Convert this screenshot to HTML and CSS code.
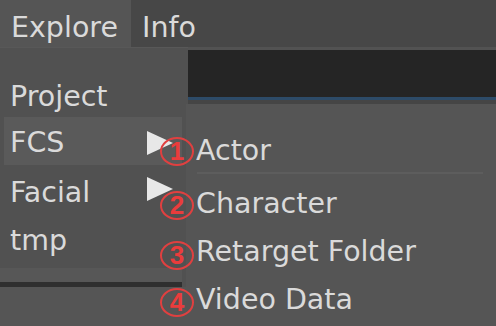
FILE: index.html
```html
<!DOCTYPE html>
<html>
<head>
<meta charset="utf-8">
<link rel="stylesheet" href="styles.css">
</head>
<body>
<div class="app">
  <div class="menubar">
    <div class="tab tab-active">Explore</div>
    <div class="tab">Info</div>
  </div>
  <div class="content">
    <div class="viewport-strip"></div>
    <div class="viewport-line"></div>
  </div>

  <div class="dropdown">
    <div class="item">Project</div>
    <div class="item item-hover">FCS</div>
    <div class="item">Facial</div>
    <div class="item">tmp</div>
    <div class="dropdown-foot"></div>
  </div>

  <div class="submenu">
    <div class="item">Actor</div>
    <div class="separator"></div>
    <div class="item">Character</div>
    <div class="item">Retarget Folder</div>
    <div class="item">Video Data</div>
  </div>

  <svg class="arrow arrow-fcs" width="28" height="26" viewBox="0 0 28 26"><polygon points="1,1 27,13 1,25" fill="#e8e8e8"/></svg>
  <svg class="arrow arrow-facial" width="28" height="26" viewBox="0 0 28 26"><polygon points="1,1 27,13 1,25" fill="#e8e8e8"/></svg>

  <span class="badge badge-1">1</span>
  <span class="badge badge-2">2</span>
  <span class="badge badge-3">3</span>
  <span class="badge badge-4">4</span>
</div>
</body>
</html>
```

FILE: styles.css
```css
* { box-sizing: border-box; }
html, body {
  margin: 0;
  padding: 0;
  width: 496px;
  height: 326px;
  overflow: hidden;
  background: #555555;
}
.app {
  position: relative;
  width: 496px;
  height: 326px;
  font-family: "DejaVu Sans", sans-serif;
  font-size: 28.5px;
  color: #dadada;
  background: #555555;
}
.menubar {
  display: flex;
  height: 47px;
  background: #474747;
}
.tab {
  padding: 9px 0 0 11px;
  line-height: 38px;
}
.tab-active {
  width: 131px;
  background: #555555;
}
.content {
  border-top: 3px solid #525252;
}
.viewport-strip {
  height: 47px;
  background: #252525;
}
.viewport-line {
  background: #2d4b68;
  border-bottom: 4px solid #454545;
  height: 7px;
}
.dropdown {
  position: absolute;
  left: 0;
  top: 47px;
  width: 188px;
  padding-top: 21px;
  background: #515151;
  border-top: 1px solid #585858;
}
.item {
  height: 48px;
  line-height: 40px;
  padding: 8px 0 0 10px;
  white-space: nowrap;
}
.item-hover {
  margin-right: 6px;
  margin-left: 4px;
  padding-left: 6px;
  padding-top: 6px;
  background: #5a5a5a;
}
.dropdown-foot {
  margin-top: 7px;
  background: #575757;
  border-bottom: 5px solid #2f2f2f;
  height: 19px;
  margin-right: 6px;
}
.submenu {
  position: absolute;
  left: 186px;
  top: 104px;
  right: 0;
  bottom: 0;
  padding-top: 19px;
  background: #555555;
}
.separator {
  height: 2px;
  margin: 1px 13px 2px 11px;
  background: #5d5d5d;
}
.arrow {
  position: absolute;
  left: 146px;
}
.arrow-fcs { top: 130px; }
.arrow-facial { top: 176px; }
.badge {
  position: absolute;
  left: 160px;
  width: 34px;
  height: 29px;
  border: 2px solid #e04040;
  border-radius: 50%;
  font-family: "Liberation Sans", sans-serif;
  font-weight: bold;
  font-size: 26px;
  line-height: 25px;
  text-align: center;
  color: #ea3c3c;
}
.badge-1 { top: 137px; }
.badge-2 { top: 191px; }
.badge-3 { top: 241px; }
.badge-4 { top: 288px; }
```
